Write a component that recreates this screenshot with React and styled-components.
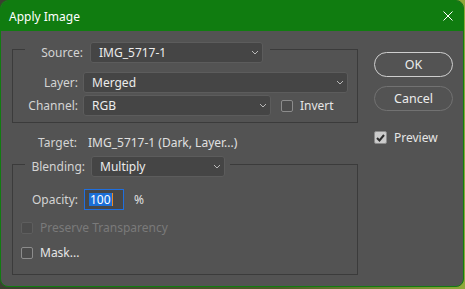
import React from 'react';
import styled, { createGlobalStyle } from 'styled-components';

const Global = createGlobalStyle`
  html, body {
    margin: 0;
    padding: 0;
  }
  body {
    width: 465px;
    height: 289px;
    overflow: hidden;
    background: linear-gradient(90deg, #3b3f30 0%, #4c5a28 60%, #8fa83a 100%);
    font-family: "Noto Sans", "Open Sans", sans-serif;
  }
`;

const Window = styled.div`
  width: 464px;
  height: 287px;
  box-sizing: border-box;
  border: 1px solid #107c10;
  border-radius: 8px;
  overflow: hidden;
  display: flex;
  flex-direction: column;
  background: #535353;
`;

const TitleBar = styled.div`
  flex: none;
  height: 30px;
  background: #107c10;
  display: flex;
  align-items: center;
  justify-content: space-between;
  padding: 0 10px 0 8px;
  color: #fff;
  font-size: 12px;
`;

const CloseButton = styled.button`
  width: 10px;
  height: 10px;
  padding: 0;
  border: none;
  background: none;
  display: flex;
  margin-top: -1px;
`;

const Body = styled.div`
  flex: 1;
  display: flex;
  padding: 4px 0 0 11px;
  font-size: 12px;
  color: #d4d4d4;
`;

const Main = styled.div`
  width: 346px;
  display: flex;
  flex-direction: column;
`;

const Side = styled.div`
  display: flex;
  flex-direction: column;
  align-items: flex-start;
  padding: 17px 0 0 16px;
`;

const Group = styled.fieldset`
  margin: 0;
  min-width: 0;
  box-sizing: border-box;
  width: 346px;
  border: 1px solid #3b3b3b;
  padding: ${p => p.$pad};
  display: flex;
  flex-direction: column;
  gap: ${p => p.$gap}px;
`;

const Legend = styled.legend`
  margin-left: 12px;
  padding: ${p => p.$pad};
  display: flex;
  align-items: center;
`;

const Row = styled.div`
  display: flex;
  align-items: center;
  height: ${p => p.$h || 21}px;
`;

const Label = styled.span`
  width: ${p => p.$w}px;
  margin-right: ${p => p.$gap}px;
  text-align: right;
  white-space: nowrap;
  flex: none;
`;

const Select = styled.div`
  box-sizing: border-box;
  width: ${p => p.$w}px;
  height: ${p => p.$h || 21}px;
  background: #454545;
  border: 1px solid #5c5c5c;
  border-radius: 3px;
  display: flex;
  align-items: center;
  justify-content: space-between;
  padding: 0 3px 0 ${p => p.$pl || 8}px;
  color: #ececec;
  flex: none;
`;

const Value = styled.span`
  color: #e0e0e0;
  white-space: nowrap;
`;

const Check = styled.span`
  box-sizing: border-box;
  width: ${p => p.$size || 12}px;
  height: ${p => p.$size || 12}px;
  border-radius: 2px;
  border: 1px solid ${p => (p.$disabled ? '#5e5e5e' : '#8c8c8c')};
  background: ${p => (p.$checked ? '#cbcbcb' : '#4c4c4c')};
  display: flex;
  align-items: center;
  justify-content: center;
  flex: none;
`;

const CheckRow = styled.label`
  display: flex;
  align-items: center;
  gap: 7px;
  height: 15px;
  margin-left: ${p => p.$ml || 0}px;
  margin-top: ${p => p.$mt || 0}px;
  color: ${p => (p.$disabled ? '#7a7a7a' : '#e6e6e6')};
  white-space: nowrap;
`;

const Button = styled.button`
  box-sizing: border-box;
  width: 79px;
  height: 25px;
  border-radius: 13px;
  background: transparent;
  border: ${p => (p.$primary ? '1.5px solid #cfcfcf' : '1px solid #727272')};
  color: #ececec;
  font-family: inherit;
  font-size: 12.5px;
  padding: 0;
  margin-bottom: ${p => p.$mb || 0}px;
`;

const Opacity = styled.div`
  box-sizing: border-box;
  width: 40px;
  height: 21px;
  border: 1px solid #1f6fdf;
  background: #474747;
  display: flex;
  align-items: center;
  padding-left: 4px;
  flex: none;
`;

const Selected = styled.span`
  background: #1c6fd6;
  color: #fff;
  line-height: 13px;
  padding: 0 1px;
  border-right: 1px solid #f08a24;
`;

const Percent = styled.span`
  margin-left: 10px;
  color: #e0e0e0;
`;

const TargetRow = styled.div`
  display: flex;
  align-items: center;
  height: 16px;
  margin: 11px 0 2px;
`;

const Chevron = () => (
  <svg width="8" height="5" viewBox="0 0 8 5">
    <path d="M1 1L4 4L7 1" stroke="#b8b8b8" strokeWidth="1" fill="none" />
  </svg>
);

const Tick = () => (
  <svg width="9" height="8" viewBox="0 0 9 8">
    <path d="M1 4L3.5 6.5L8 1" stroke="#2e2e2e" strokeWidth="2" fill="none" />
  </svg>
);

export default function App() {
  return (
    <>
      <Global />
      <Window>
        <TitleBar>
          <span>Apply Image</span>
          <CloseButton aria-label="Close">
            <svg width="10" height="10" viewBox="0 0 10 10">
              <path d="M0.5 0.5L9.5 9.5M9.5 0.5L0.5 9.5" stroke="#fff" strokeWidth="1" />
            </svg>
          </CloseButton>
        </TitleBar>
        <Body>
          <Main>
            <Group $pad="9px 8px 6px 0" $gap={2}>
              <Legend $pad="7px 7px 0 4px">
                <Label $w={54} $gap={7}>Source:</Label>
                <Select $w={173}>IMG_5717-1<Chevron /></Select>
              </Legend>
              <Row>
                <Label $w={65} $gap={5}>Layer:</Label>
                <Select $w={265}>Merged<Chevron /></Select>
              </Row>
              <Row>
                <Label $w={65} $gap={5}>Channel:</Label>
                <Select $w={188}>RGB<Chevron /></Select>
                <CheckRow $ml={10}>
                  <Check />
                  Invert
                </CheckRow>
              </Row>
            </Group>
            <TargetRow>
              <Label $w={65} $gap={11}>Target:</Label>
              <Value>IMG_5717-1 (Dark, Layer...)</Value>
            </TargetRow>
            <Group $pad="12px 8px 14px 0" $gap={10}>
              <Legend $pad="4px 5px 0 4px">
                <Label $w={56} $gap={6}>Blending:</Label>
                <Select $w={134}>Multiply<Chevron /></Select>
              </Legend>
              <Row>
                <Label $w={65} $gap={6}>Opacity:</Label>
                <Opacity><Selected>100</Selected></Opacity>
                <Percent>%</Percent>
              </Row>
              <CheckRow $ml={8} $disabled>
                <Check $disabled />
                Preserve Transparency
              </CheckRow>
              <CheckRow $ml={8}>
                <Check />
                Mask...
              </CheckRow>
            </Group>
          </Main>
          <Side>
            <Button $primary $mb={9}>OK</Button>
            <Button>Cancel</Button>
            <CheckRow $mt={19}>
              <Check $size={13} $checked><Tick /></Check>
              Preview
            </CheckRow>
          </Side>
        </Body>
      </Window>
    </>
  );
}
